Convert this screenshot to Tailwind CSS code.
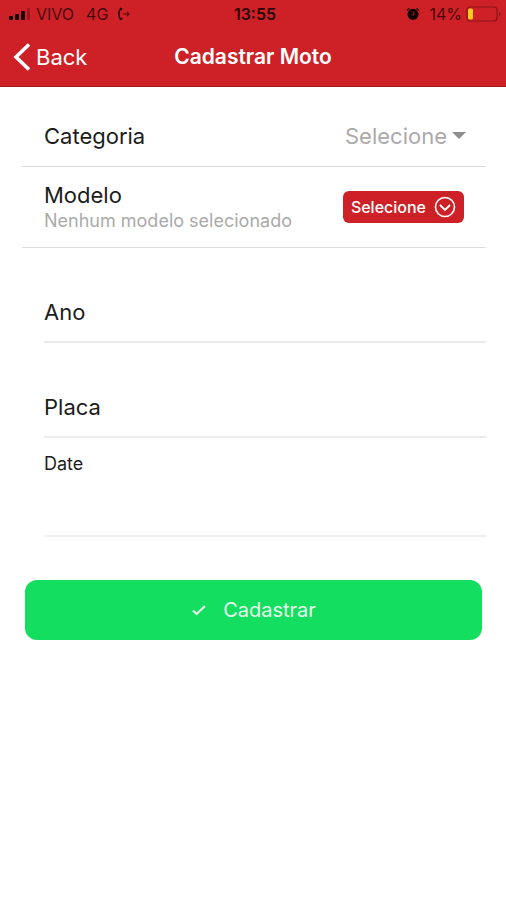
<!DOCTYPE html>
<html lang="pt-BR">
<head>
    <meta charset="UTF-8">
    <meta name="viewport" content="width=device-width, initial-scale=1.0">
    <title>Cadastrar Moto</title>
    <script src="https://cdn.jsdelivr.net/npm/@tailwindcss/browser@4"></script>
</head>
<body class="bg-white min-h-screen text-[#1c1c1c] font-['Inter','Liberation_Sans',sans-serif]">

<!-- Header -->
<header class="bg-[#ce2127] border-b border-[#a81a1f]">
    <!-- Status bar -->
    <div class="grid grid-cols-3 items-center h-7 pl-2 pr-1 text-base text-[#4a090c]">
        <div class="flex items-center">
            <svg class="w-6 h-3 mr-1" viewBox="0 0 24 12" fill="#160204">
                <rect x="1" y="8" width="4" height="4" rx="1"/>
                <rect x="7" y="6" width="4" height="6" rx="1"/>
                <rect x="13" y="3" width="4" height="9" rx="1"/>
                <rect x="19" y="0" width="3" height="12" rx="1" fill="#a0161c"/>
            </svg>
            <span>VIVO</span>
            <span class="ml-3">4G</span>
            <svg class="w-4 h-4 ml-2" viewBox="0 0 16 16" fill="none" stroke="#2b0507">
                <path d="M5 2.5C2 5.5 2 10.5 5 13.5" stroke-width="1.6"/>
                <path d="M4 2.2l2 1.6M4 13.8l2-1.6" stroke-width="2"/>
                <path d="M7 8h6M11 6l2 2-2 2" stroke="#5a0c10" stroke-width="1.2"/>
            </svg>
        </div>
        <div class="text-center font-semibold text-[#2b0507]">13:55</div>
        <div class="flex items-center justify-end">
            <svg class="w-4 h-4 mr-2" viewBox="0 0 16 16">
                <circle cx="8" cy="8.3" r="5.5" fill="#120203"/>
                <path d="M2 4.5l2.5-2.3M14 4.500l-2.5-2.3" stroke="#2b0507" stroke-width="1.3" fill="none"/>
                <path d="M8.8 5.5v3.3L6.5 9" stroke="#a0161c" stroke-width="1.1" fill="none"/>
            </svg>
            <span>14%</span>
            <svg class="w-9 h-4 ml-1" viewBox="0 0 36 16">
                <rect x="1" y="1" width="30" height="14" rx="3" fill="none" stroke="#8c1418" stroke-width="1.2"/>
                <rect x="2" y="2.5" width="5" height="11" rx="1.5" fill="#fccb1c"/>
                <path d="M33 6c2 .8 2 3.200 0 4z" fill="#8c1418"/>
            </svg>
        </div>
    </div>

    <!-- Navigation -->
    <nav class="grid grid-cols-[1fr_auto_1fr] items-center h-[58px] px-3 text-white">
        <a href="#" class="flex items-center gap-1 text-[22px]">
            <svg class="w-5 h-7" viewBox="0 0 20 28" fill="none" stroke="currentColor" stroke-width="3.6">
                <path d="M17 1.5L4 14l13 12.5"/>
            </svg>
            Back
        </a>
        <h1 class="text-[21px] font-semibold">Cadastrar Moto</h1>
    </nav>
</header>

<!-- Form -->
<form class="pl-[22px] pr-5 pt-5">
    <div class="flex items-center justify-between h-[60px] pl-[22px] pr-5 border-b border-[#dcdcdc]">
        <label for="categoria" class="text-[22px]">Categoria</label>
        <div class="flex items-center gap-1">
            <select id="categoria" class="appearance-none bg-transparent text-[22px] text-[#aaaaaa] outline-none">
                <option>Selecione</option>
            </select>
            <svg class="w-3.5 h-3.5 mb-1" viewBox="0 0 14 14" fill="#8f8f8f"><path d="M0 4h14L7 11z"/></svg>
        </div>
    </div>

    <div class="flex items-center justify-between h-[81px] pl-[22px] pr-[22px] border-b border-[#dcdcdc]">
        <div>
            <p class="text-[22px] leading-7">Modelo</p>
            <p class="text-[18px] leading-6 text-[#aaaaaa]">Nenhum modelo selecionado</p>
        </div>
        <button type="button" class="flex items-center gap-2 h-8 px-2 rounded-md bg-[#ce2127] text-white text-base font-medium whitespace-nowrap">
            Selecione
            <svg class="w-[22px] h-[22px]" viewBox="0 0 22 22" fill="none" stroke="currentColor">
                <circle cx="11" cy="11" r="9.5" stroke-width="1.6"/>
                <path d="M6 9l5 5 5-5" stroke-width="1.8"/>
            </svg>
        </button>
    </div>

    <div class="pl-[22px]">
        <div class="flex items-center h-[95px] pt-9 border-b-2 border-[#ebebeb]">
            <label for="ano" class="text-[22px] mr-4">Ano</label>
            <input id="ano" type="text" class="flex-1 min-w-0 h-10 outline-none text-[22px]">
        </div>
        <div class="flex items-center h-[95px] pt-9 border-b-2 border-[#ebebeb]">
            <label for="placa" class="text-[22px] mr-4">Placa</label>
            <input id="placa" type="text" class="flex-1 min-w-0 h-10 outline-none text-[22px]">
        </div>
        <div class="flex flex-col h-[99px] pt-3 border-b-2 border-[#f0f0f0]">
            <label for="date" class="text-[18px] leading-7">Date</label>
            <input id="date" type="text" class="w-full h-12 outline-none text-[22px]">
        </div>
    </div>

    <div class="pl-[3px] pr-1 pt-[43px]">
        <button type="submit" class="flex items-center justify-center gap-4 w-full h-[60px] rounded-xl bg-[#14de60] text-[#e3fbea] text-xl">
            <svg class="w-4 h-4" viewBox="0 0 16 16" fill="none" stroke="currentColor" stroke-width="2">
                <path d="M2 8.5l3.5 3.5L14 4"/>
            </svg>
            Cadastrar
        </button>
    </div>
</form>

</body>
</html>
